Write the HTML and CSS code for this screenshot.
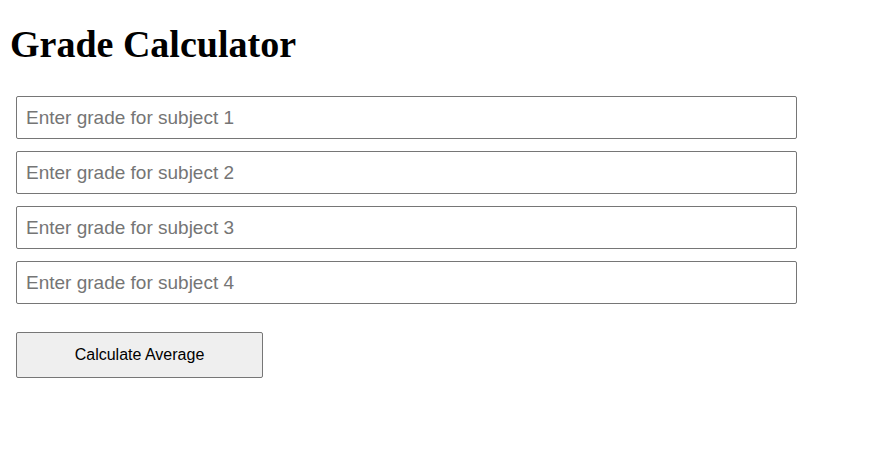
FILE: index.html
```html
<!DOCTYPE html>
<html>
<head>
<meta charset="utf-8">
<title>Grade Calculator</title>
<link rel="stylesheet" href="styles.css">
</head>
<body>
<h1 class="title">Grade Calculator</h1>
<form class="form">
  <input class="grade" type="text" placeholder="Enter grade for subject 1">
  <input class="grade" type="text" placeholder="Enter grade for subject 2">
  <input class="grade" type="text" placeholder="Enter grade for subject 3">
  <input class="grade" type="text" placeholder="Enter grade for subject 4">
  <button class="calc" type="button">Calculate Average</button>
</form>
</body>
</html>
```
FILE: styles.css
```css
html, body {
  margin: 0;
  padding: 0;
  background: #fff;
}
body {
  padding: 0 8px;
}
.title {
  font-family: "Liberation Serif", "Times New Roman", serif;
  font-size: 38px;
  font-weight: bold;
  margin: 22px 0 0 2px;
  color: #000;
}
.form {
  display: flex;
  flex-direction: column;
  align-items: flex-start;
  gap: 12px;
  padding: 30px 0 0 8px;
}
.grade {
  box-sizing: border-box;
  width: 781px;
  height: 43px;
  margin: 0;
  padding: 0 9px;
  border: 1px solid #767676;
  border-radius: 2px;
  font-family: "Liberation Sans", Arial, sans-serif;
  font-size: 19px;
  color: #000;
  background: #fff;
}
.grade::placeholder {
  color: #757575;
}
.calc {
  box-sizing: border-box;
  width: 247px;
  height: 46px;
  margin-top: 16px;
  border: 1px solid #767676;
  border-radius: 2px;
  background: #efefef;
  font-family: "Liberation Sans", Arial, sans-serif;
  font-size: 16px;
  color: #000;
}
```
